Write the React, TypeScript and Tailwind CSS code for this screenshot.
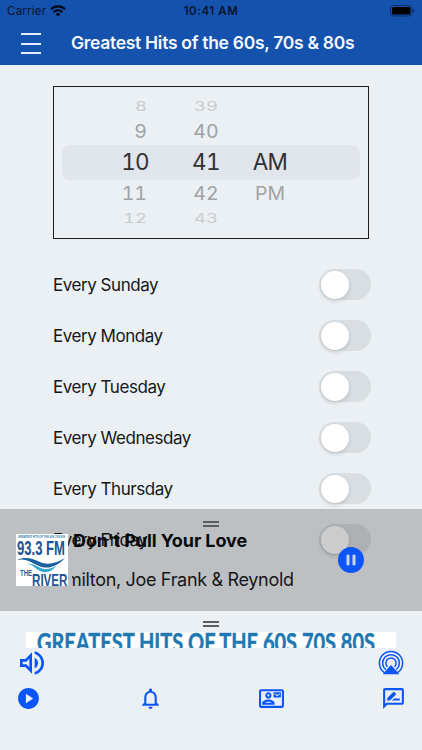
import { useState } from "react";
import {
  MdOutlineContactMail,
  MdOutlineNotifications,
  MdOutlineRateReview,
  MdOutlineVolumeUp,
  MdPause,
  MdPlayCircle,
} from "react-icons/md";

const DAYS = ["Sunday", "Monday", "Tuesday", "Wednesday", "Thursday", "Friday"];

type WheelRow = {
  hour: string;
  minute: string;
  period: string;
  row: string;
  text: string;
};

const WHEEL: WheelRow[] = [
  { hour: "8", minute: "39", period: "", row: "h-[21px]", text: "text-[18.5px] text-[#c8cccf] scale-y-[0.68]" },
  { hour: "9", minute: "40", period: "", row: "h-[28px] pt-[1px]", text: "text-[19.5px] text-[#9fa3a6] scale-y-[0.95]" },
  { hour: "10", minute: "41", period: "AM", row: "h-[35px]", text: "text-[22.5px] text-[#303236] tracking-[-0.03em]" },
  { hour: "11", minute: "42", period: "PM", row: "h-[28px]", text: "text-[19.5px] text-[#9fa3a6] scale-y-[0.95]" },
  { hour: "12", minute: "43", period: "", row: "h-[21px]", text: "text-[18.5px] text-[#c8cccf] scale-y-[0.68]" },
];

function StatusBar() {
  return (
    <div className="flex h-[22px] items-center justify-between pl-[7px] pr-[7px] text-[#07142e]">
      <div className="flex w-[80px] items-center gap-[4px]">
        <span className="pt-px text-[11.5px] tracking-[0.02em]">Carrier</span>
        <svg viewBox="0 0 16 12" className="h-[12px] w-[16px]" fill="none" stroke="#000814">
          <path d="M1 4.2a10 10 0 0 1 14 0" strokeWidth="2.2" />
          <path d="M3.6 7a6.3 6.3 0 0 1 8.8 0" strokeWidth="2" />
          <path d="M8 11.5 5.6 9.1a3.4 3.4 0 0 1 4.8 0z" fill="#000814" stroke="none" />
        </svg>
      </div>
      <span className="pt-px text-[11.5px] font-semibold tracking-[0.05em]">10:41 AM</span>
      <div className="flex w-[80px] justify-end">
        <svg viewBox="0 0 25 12" className="h-[12px] w-[25px]">
          <rect x="0.5" y="0.5" width="21.5" height="10.5" rx="3" fill="none" stroke="#0c2f68" />
          <rect x="2" y="2" width="18.5" height="7.5" rx="1.6" fill="#000" />
          <path d="M23.2 4v4q1.3-.6 1.3-2t-1.3-2z" fill="#0c2f68" />
        </svg>
      </div>
    </div>
  );
}

function TimeWheel() {
  return (
    <div className="ml-[53px] mt-[21px] h-[153px] w-[316px] border border-[#1c1d1f] tabular-nums">
      <div className="flex h-full flex-col justify-center px-[8px]">
        {WHEEL.map((item) => (
          <div
            key={item.hour}
            className={`flex items-center rounded-[8px] ${item.row} ${item.period === "AM" ? "bg-[#e1e5ec]" : ""}`}
          >
            <span className={`w-[87px] text-right leading-none ${item.period === "AM" ? "" : "pr-[2px]"} ${item.text}`}>
              {item.hour}
            </span>
            <span className={`ml-[28px] w-[58px] text-center leading-none ${item.text}`}>{item.minute}</span>
            <span className={`ml-[6px] w-[58px] text-center leading-none ${item.text}`}>{item.period}</span>
          </div>
        ))}
      </div>
    </div>
  );
}

function Toggle({ on, onToggle }: { on: boolean; onToggle: () => void }) {
  return (
    <button
      onClick={onToggle}
      className={`flex h-[31px] w-[52px] items-center rounded-full p-[2px] ${on ? "justify-end bg-[#0b55fa]" : "bg-[#d9dee2]"}`}
    >
      <span className="h-[28px] w-[28px] rounded-full bg-white shadow-[0_2px_4px_rgba(0,0,0,0.14)]" />
    </button>
  );
}

function Handle() {
  return (
    <div className="mx-auto flex h-[6px] w-[16px] flex-col justify-between">
      <div className="h-[2px] bg-[#5b5d5f]" />
      <div className="h-[2px] bg-[#5b5d5f]" />
    </div>
  );
}

function StationLogo() {
  return (
    <svg
      viewBox="0 0 52 52"
      className="h-[52px] w-[52px] shrink-0 bg-white"
      fontFamily="'Liberation Sans', sans-serif"
      fontWeight="bold"
    >
      <text x="2" y="3.6" fontSize="3.8" fill="#2b78ae" textLength="47" lengthAdjust="spacingAndGlyphs">
        GREATEST HITS OF THE 60S 70S 80S
      </text>
      <text x="1" y="21" fontSize="21" fill="#1d5694" textLength="48" lengthAdjust="spacingAndGlyphs">
        93.3 FM
      </text>
      <path d="M1 26c9-4 16-1 23 2s15 2 25-4c-7 8-17 12-26 8S10 24 1 26z" fill="#1b619f" />
      <path d="M11 30c6-1 10 3 15 4.5s10 0 15-3c-5 6-11 8.5-17 5.5S17 30 11 30z" fill="#35a6d1" />
      <text x="4" y="42" fontSize="8.5" fill="#1b619f" textLength="12" lengthAdjust="spacingAndGlyphs">
        THE
      </text>
      <text x="16" y="52" fontSize="16.5" fill="#1b5797" textLength="35.5" lengthAdjust="spacingAndGlyphs">
        RIVER
      </text>
    </svg>
  );
}

function NowPlaying() {
  return (
    <section className="absolute inset-x-0 top-[509px] h-[102px] bg-black/20">
      <div className="pt-[12px]">
        <Handle />
      </div>
      <div className="flex pl-[16px] pt-[7px]">
        <StationLogo />
        <div className="ml-[4px] w-[221px] overflow-hidden whitespace-nowrap">
          <p className="mt-[-4px] pl-px text-[18px] font-bold leading-[22px] tracking-[-0.005em] text-[#08090b]">
            Don't Pull Your Love
          </p>
          <p className="ml-[-6px] mt-[17px] text-[18px] leading-[22px] tracking-[-0.018em] text-[#15171a]">
            milton, Joe Frank &amp; Reynolds
          </p>
        </div>
        <button className="ml-[45px] mt-[13px] flex h-[26px] w-[26px] items-center justify-center rounded-full bg-[#0b55fa] text-[#cbd5e6]">
          <MdPause className="h-[18px] w-[18px]" />
        </button>
      </div>
    </section>
  );
}

function AirplayIcon() {
  return (
    <svg viewBox="0 0 26 26" className="h-[26px] w-[26px]" fill="none" stroke="#0b55fa" strokeWidth="1.5">
      <path d="M6.2 22.5a11.6 11.6 0 1 1 13.6 0" />
      <path d="M7.7 19.6a8.4 8.4 0 1 1 10.6 0" />
      <path d="M9.5 16.8a5.1 5.1 0 1 1 7 0" />
      <path d="M12.2 15.8q.8-.9 1.6 0l7 7.6q.5.9-.5.9H5.7q-1 0-.5-.9z" fill="#0b55fa" stroke="none" />
    </svg>
  );
}

function Footer() {
  return (
    <footer className="absolute inset-x-0 top-[611px] h-[139px] bg-[#ebf0f4] pt-[10px] text-[#0b55fa]">
      <Handle />
      <div className="ml-[26px] mt-[5px] h-[16px] w-[370px] overflow-hidden bg-white">
        <svg viewBox="0 0 370 16" className="h-[16px] w-[370px]">
          <text
            x="11"
            y="20"
            fontSize="26"
            fontFamily="Lato, sans-serif"
            fontWeight="bold"
            fill="#2078b3"
            stroke="#2078b3"
            strokeWidth="0.5"
            textLength="338"
            lengthAdjust="spacingAndGlyphs"
          >
            GREATEST HITS OF THE 60S 70S 80S
          </text>
        </svg>
      </div>
      <div className="flex h-[30px] items-center justify-between pl-[16px] pr-[18px]">
        <MdOutlineVolumeUp className="h-[32px] w-[32px]" />
        <AirplayIcon />
      </div>
      <div className="mt-[8px] flex items-center justify-between pl-[16px] pr-[16px]">
        <MdPlayCircle className="h-[25px] w-[25px]" />
        <MdOutlineNotifications className="h-[25px] w-[25px]" />
        <MdOutlineContactMail className="h-[25px] w-[25px]" />
        <MdOutlineRateReview className="h-[25px] w-[25px]" />
      </div>
    </footer>
  );
}

export default function App() {
  const [enabled, setEnabled] = useState<Record<string, boolean>>({});

  return (
    <div className="relative h-[750px] w-[422px] overflow-hidden bg-[#ebf0f4] font-['Inter',sans-serif]">
      <header className="h-[65px] bg-[#1552ad]">
        <StatusBar />
        <div className="flex h-[43px] items-center pl-[21px]">
          <button className="flex h-[21px] w-[20px] flex-col justify-between">
            <span className="h-[2px] w-full bg-[#e4efff]" />
            <span className="h-[2px] w-full bg-[#e4efff]" />
            <span className="h-[2px] w-full bg-[#e4efff]" />
          </button>
          <h1 className="ml-[30px] whitespace-nowrap text-[17.5px] font-semibold tracking-[-0.017em] text-[#f4f8ff]">
            Greatest Hits of the 60s, 70s &amp; 80s
          </h1>
        </div>
      </header>

      <TimeWheel />

      <ul className="ml-[53px] mt-[20px] w-[318px]">
        {DAYS.map((day) => (
          <li key={day} className="flex h-[51px] items-center justify-between">
            <span className="pt-[2px] text-[17px] tracking-[-0.027em] text-[#15171a]">Every {day}</span>
            <Toggle
              on={!!enabled[day]}
              onToggle={() => setEnabled((prev) => ({ ...prev, [day]: !prev[day] }))}
            />
          </li>
        ))}
      </ul>

      <NowPlaying />
      <Footer />
    </div>
  );
}
